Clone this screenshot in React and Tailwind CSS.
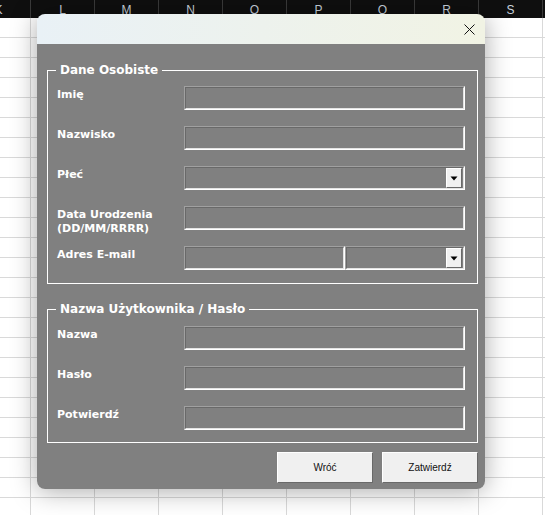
import React from 'react'

const COLS = ['K', 'L', 'M', 'N', 'O', 'P', 'Q', 'R', 'S', '']
const ROWS = Array.from({ length: 26 }, (_, i) => i)

function DropButton() {
  return (
    <div className="w-[16px] h-[20px] mr-[1px] bg-[#f0f0f0] border border-t-white border-l-white border-r-[#696969] border-b-[#696969] flex items-center justify-center">
      <svg width="8" height="5" viewBox="0 0 8 5">
        <path d="M0.5 0.5h7L4 4.5z" fill="#000" />
      </svg>
    </div>
  )
}

function Field({ className = '', drop = false }) {
  return (
    <div className={`h-[24px] border border-t-[#a0a0a0] border-l-[#a0a0a0] border-r-white border-b-white ${className}`}>
      <div className="h-full border border-t-[#696969] border-l-[#696969] border-r-[#e3e3e3] border-b-[#e3e3e3] flex items-center justify-end">
        {drop && <DropButton />}
      </div>
    </div>
  )
}

function Row({ label, children }) {
  return (
    <div className="grid grid-cols-[127px_1fr] h-[24px]">
      <div className="pt-[2px] font-['DejaVu_Sans',sans-serif] text-[11px] leading-[14px] font-bold text-white whitespace-nowrap">{label}</div>
      {children}
    </div>
  )
}

function Frame({ title, className = '', children }) {
  return (
    <fieldset className={`border border-white ${className}`}>
      <legend className="ml-[8px] px-[4px] font-['DejaVu_Sans',sans-serif] text-[12px] leading-[16px] font-bold text-white">{title}</legend>
      <div className="flex flex-col gap-[16px] pl-[9px] pr-[12px]">{children}</div>
    </fieldset>
  )
}

function Button({ children }) {
  return (
    <button className="w-[96px] h-[31px] bg-[#f0f0f0] border border-t-white border-l-white border-r-[#696969] border-b-[#696969] text-[10px] text-[#111]">
      {children}
    </button>
  )
}

export default function App() {
  return (
    <div className="relative w-[545px] h-[515px] overflow-hidden bg-white" style={{ fontFamily: '"Liberation Sans", Arial, sans-serif' }}>
      {/* sheet */}
      <div className="flex h-[18px] bg-[#0f0f0f] ml-[-33px]">
        {COLS.map((c, i) => (
          <div key={i} className="w-[64px] shrink-0 border-r border-[#3a3a3a] text-center text-[12px] leading-[18px] pt-[1px] text-[#c9d2dd]">
            {c}
          </div>
        ))}
      </div>
      {ROWS.map((r) => (
        <div key={r} className="flex h-[20px] ml-[-33px]">
          {COLS.map((c, i) => (
            <div key={i} className="w-[64px] shrink-0 border-r border-b border-[#d9d9d9]" />
          ))}
        </div>
      ))}

      {/* dialog */}
      <div className="absolute left-[37px] top-[14px] w-[448px] h-[475px] rounded-lg overflow-hidden flex flex-col shadow-[0_2px_26px_rgba(0,0,0,0.34)]">
        <div className="h-[30px] shrink-0 bg-linear-to-r from-[#e9f1f6] to-[#f1f3e4] flex items-center justify-end pr-[10px]">
          <svg width="11" height="11" viewBox="0 0 11 11">
            <path d="M0.5 0.5L10.5 10.5M10.5 0.5L0.5 10.5" stroke="#111" strokeWidth="1" fill="none" />
          </svg>
        </div>
        <div className="flex-1 bg-[#808080] pt-[18px] pl-[10px] pr-[7px] flex flex-col">
          <Frame title="Dane Osobiste" className="pt-0 pb-[13px]">
            <div className="h-[8px] -mb-[16px]" />
            <Row label="Imię"><Field /></Row>
            <Row label="Nazwisko"><Field /></Row>
            <Row label="Płeć"><Field drop /></Row>
            <Row label={<>Data Urodzenia<br />(DD/MM/RRRR)</>}><Field /></Row>
            <Row label="Adres E-mail">
              <div className="flex">
                <Field className="w-[161px]" />
                <Field className="flex-1" drop />
              </div>
            </Row>
          </Frame>

          <Frame title="Nazwa Użytkownika / Hasło" className="mt-[17px] pb-[12px]">
            <div className="h-[9px] -mb-[16px]" />
            <Row label="Nazwa"><Field /></Row>
            <Row label="Hasło"><Field /></Row>
            <Row label="Potwierdź"><Field /></Row>
          </Frame>

          <div className="flex justify-end gap-[9px] mt-[9px]">
            <Button>Wróć</Button>
            <Button>Zatwierdź</Button>
          </div>
        </div>
      </div>
    </div>
  )
}
